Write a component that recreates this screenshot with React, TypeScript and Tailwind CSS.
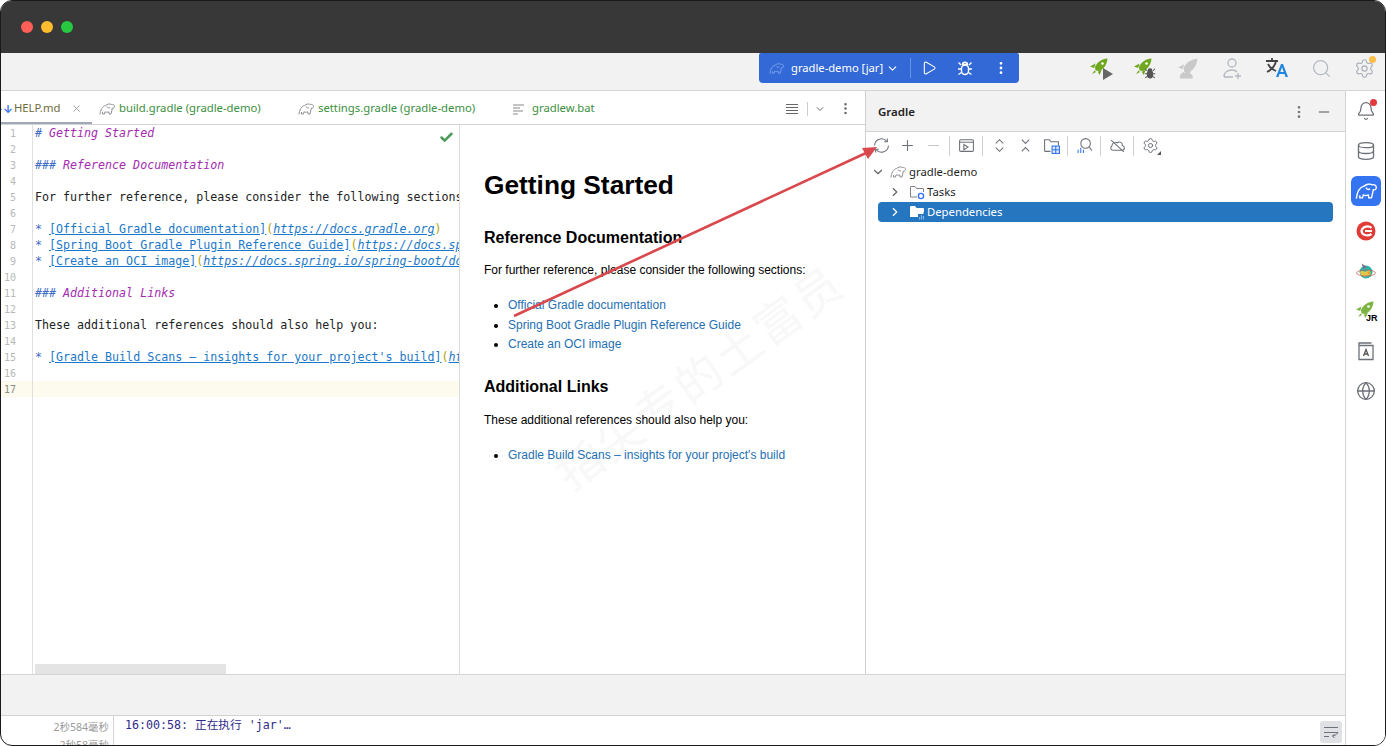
import { ChevronDown, ChevronRight, Database, Globe, MoreVertical, Play, Plus, Search, Settings, Minus, X, Bell, Check } from "lucide-react";

const ui = "font-['Noto_Sans','Inter',sans-serif]";

function Elephant({ className = "", color = "#8c8f94" }: { className?: string; color?: string }) {
  return (
    <svg viewBox="0 0 16 16" className={className} fill="none" stroke={color} strokeWidth="1" strokeLinejoin="round">
      <path d="M1 13.5 C1.5 9 3 5.5 6.5 4.5 C8 3 11 2.5 12.5 3.5 C14 3 15.5 4 15.5 5.5 C15.5 7 14 7.5 13.3 7 C13 9 12.5 11 12 13 L10 13 L9.8 10.8 C8.5 11.5 7 11.3 6 10.8 L5.5 13 L3.5 13 L3.5 11" />
      <path d="M8 5.5 C8.5 7 10 7.2 11 6.5" />
    </svg>
  );
}

function Rocket({ color = "#6fa81f", className = "", cloud }: { color?: string; className?: string; cloud?: boolean }) {
  return (
    <svg viewBox="0 0 20 20" className={className}>
      <path d="M18.5 1.5 C13 2 8 5 6 10 L6.5 13.5 L10 14 C15 12 18 7.5 18.5 1.5 Z" fill={color} />
      <path d="M6.5 6.5 L1 9.5 L5.2 11 Z M13 12.5 L10.5 18 L8.8 14.8 Z M5.5 13.5 L3 17 L7 15 Z" fill={color} />
      {cloud ? (
        <path d="M3 19.5 C1.5 16.5 4 14.5 6 15 C7 13 11 13 12 15.5 C14 15.5 15 18 14 19.5 Z" fill={color} />
      ) : (
        <circle cx="13.5" cy="6.5" r="1.3" fill="#fff" />
      )}
    </svg>
  );
}

function Beetle({ className = "", color = "currentColor", filled }: { className?: string; color?: string; filled?: boolean }) {
  return (
    <svg viewBox="0 0 16 16" className={className} fill={filled ? color : "none"} stroke={color} strokeWidth="1.4">
      <path d="M5.5 4.5 C5.5 1.5 10.5 1.5 10.5 4.5 Z" />
      <rect x="4.5" y="5" width="7" height="9.5" rx="3.5" />
      <path d="M1.5 2.5 L4 5 M14.5 2.5 L12 5 M1 9 H4.5 M15 9 H11.5 M1.5 14.5 L4.5 12.5 M14.5 14.5 L11.5 12.5" fill="none" />
    </svg>
  );
}

function RunRocket({ bug }: { bug?: boolean }) {
  return (
    <div className="relative h-[22px] w-[22px]">
      <Rocket className="h-[20px] w-[20px]" />
      {bug ? (
        <Beetle className="absolute bottom-0 right-[-1px] h-[12px] w-[12px]" color="#555" filled />
      ) : (
        <svg viewBox="0 0 10 12" className="absolute bottom-[-1px] right-[-2px] h-[12px] w-[10px]">
          <path d="M0 0 L10 6 L0 12 Z" fill="#666" />
        </svg>
      )}
    </div>
  );
}

function Translate() {
  return (
    <div className="relative h-[22px] w-[24px]">
      <svg viewBox="0 0 24 22" className="h-[22px] w-[24px]">
        <path d="M1 4 H13 M7 1 V4 M11 4 C10 9 6 13 2 15 M3 7 C5 11 8 13 11 14" fill="none" stroke="#444" strokeWidth="1.8" />
        <path d="M11 20 L16 7 H18 L23 20 H20.5 L19.5 17 H14.5 L13.5 20 Z M15.3 15 H18.7 L17 10.3 Z" fill="#2187e0" />
      </svg>
    </div>
  );
}

function Folder({ badge, white }: { badge: "gear" | "bars"; white?: boolean }) {
  return (
    <div className="relative h-[16px] w-[16px] shrink-0">
      <svg viewBox="0 0 16 16" className="h-[16px] w-[16px]">
        <path d="M1.5 13 V3 C1.5 2.7 1.7 2.5 2 2.5 H6 L7.5 4.5 H14 C14.3 4.5 14.5 4.7 14.5 5 V8" fill={white ? "#fff" : "none"} stroke={white ? "#fff" : "#7f8389"} />
        {white ? <path d="M1.5 4 H14.5 V13 H1.5 Z" fill="#fff" /> : <path d="M1.5 13 H8" stroke="#7f8389" fill="none" />}
        {badge === "gear" ? (
          <circle cx="12" cy="12" r="2.6" fill="#fff" stroke="#3574f0" strokeWidth="1.4" />
        ) : (
          <path d="M9 10 H16 V16 H9 Z" fill="#2675bf" />
        )}
        {badge === "bars" ? <path d="M10.5 15.5 V13 M12.5 15.5 V11 M14.5 15.5 V12" stroke="#7db4ea" strokeWidth="1.2" /> : null}
      </svg>
    </div>
  );
}

function Sep() {
  return <div className="mx-[6px] h-[20px] w-px shrink-0 bg-[#d0d0d0]" />;
}

function ToolButton({ children, w = "w-[26px]" }: { children: React.ReactNode; w?: string }) {
  return <div className={`flex h-[20px] shrink-0 items-center justify-center ${w}`}>{children}</div>;
}

function Tab({ label, icon, active, w }: { label: string; icon: React.ReactNode; active?: boolean; w: string }) {
  return (
    <div className={`relative flex h-full items-center ${w}`}>
      {icon}
      <span className={active ? "text-[#6e6a3a]" : "text-[#3b8f3e]"}>{label}</span>
    </div>
  );
}

const sy = "text-[#3d6dc4]";
const hd = "text-[#a32bb0] italic";
const lk = "text-[#1b78c9] underline";
const bk = "text-[#b3a200]";

const lines: React.ReactNode[] = [
  <><span className={sy + " italic"}>#</span><span className={hd}> Getting Started</span></>,
  null,
  <><span className={sy + " italic"}>###</span><span className={hd}> Reference Documentation</span></>,
  null,
  <span className="text-[#222]">For further reference, please consider the following sections:</span>,
  null,
  <><span className={sy}>*</span> <span className={lk}>[Official Gradle documentation]</span><span className={bk}>(</span><span className={lk + " italic"}>https://docs.gradle.org</span><span className={bk}>)</span></>,
  <><span className={sy}>*</span> <span className={lk}>[Spring Boot Gradle Plugin Reference Guide]</span><span className={bk}>(</span><span className={lk + " italic"}>https://docs.spring.io/spring-boot/gradle-plugin</span></>,
  <><span className={sy}>*</span> <span className={lk}>[Create an OCI image]</span><span className={bk}>(</span><span className={lk + " italic"}>https://docs.spring.io/spring-boot/docs/gradle-plugin</span></>,
  null,
  <><span className={sy + " italic"}>###</span><span className={hd}> Additional Links</span></>,
  null,
  <span className="text-[#222]">These additional references should also help you:</span>,
  null,
  <><span className={sy}>*</span> <span className={lk}>[Gradle Build Scans – insights for your project's build]</span><span className={bk}>(</span><span className={lk + " italic"}>https://scans.gradle.com</span></>,
  null,
  null,
];

function Editor() {
  return (
    <div className="relative flex h-full w-[459px] shrink-0 overflow-hidden border-r border-[#dcdcdc] bg-white font-['DejaVu_Sans_Mono',monospace] text-[11.65px] leading-[17px]">
      <div className="w-[32px] shrink-0 border-r border-[#e0e0e0]">
        {lines.map((_, i) => (
          <div key={i} className={`h-[16px] pr-[16px] text-right text-[10px] ${i === 16 ? "bg-[#fdfbee] text-[#8a8a8a]" : "text-[#b8b8b8]"}`}>
            {i + 1}
          </div>
        ))}
      </div>
      <div className="min-w-0 flex-1 overflow-hidden">
        {lines.map((line, i) => (
          <div key={i} className={`h-[16px] whitespace-pre pl-[2px] ${i === 16 ? "bg-[#fdfbee]" : ""}`}>
            {line}
          </div>
        ))}
      </div>
      <Check className="absolute left-[438px] top-[5px] h-[15px] w-[15px] text-[#4c9a5a]" strokeWidth={4} />
      <div className="absolute bottom-0 left-[34px] h-[10px] w-[191px] bg-[#e4e4e4]" />
    </div>
  );
}

function Preview() {
  const link = "text-[#2470b3] marker:text-black";
  return (
    <div className="relative min-w-0 flex-1 overflow-hidden bg-white pl-[24px] font-['Liberation_Sans',Arial,sans-serif] text-[12px] text-black">
      <div className="absolute left-[58px] top-[225px] w-[360px] -rotate-[36deg] whitespace-nowrap text-center font-['Noto_Sans_CJK_SC',sans-serif] text-[46px] leading-[50px] tracking-[3px] text-[#f8f8f8]">
        指尖专的土富员
      </div>
      <div className="relative">
        <h1 className="mt-[43px] text-[26.3px] font-bold leading-[34px]">Getting Started</h1>
        <h2 className="mt-[26px] text-[16px] font-bold leading-[20px]">Reference Documentation</h2>
        <p className="mt-[14px] leading-[16px]">For further reference, please consider the following sections:</p>
        <ul className="mt-[18px] list-disc pl-[24px] leading-[19.5px]">
          <li className={link}>Official Gradle documentation</li>
          <li className={link}>Spring Boot Gradle Plugin Reference Guide</li>
          <li className={link}>Create an OCI image</li>
        </ul>
        <h2 className="mt-[22px] text-[16px] font-bold leading-[20px]">Additional Links</h2>
        <p className="mt-[15px] leading-[16px]">These additional references should also help you:</p>
        <ul className="mt-[18px] list-disc pl-[24px] leading-[19.5px]">
          <li className={link}>Gradle Build Scans – insights for your project's build</li>
        </ul>
      </div>
    </div>
  );
}

function GradlePanel() {
  const ic = "h-[17px] w-[17px] text-[#6c7078]";
  return (
    <div className={`flex w-[480px] shrink-0 flex-col border-l border-[#cfcfcf] bg-white ${ui}`}>
      <div className="flex h-[41px] shrink-0 items-center justify-between border-b border-[#d4d4d4] bg-[#f2f2f2] pl-[12px] pr-[13px] pt-[1px]">
        <span className="text-[11.5px] font-semibold text-[#222]">Gradle</span>
        <div className="flex items-center gap-[9px]">
          <MoreVertical className="h-[16px] w-[16px] text-[#777]" />
          <Minus className="h-[16px] w-[16px] text-[#888]" />
        </div>
      </div>
      <div className="flex h-[27px] shrink-0 items-center pl-[2px]">
        <ToolButton>
          <svg viewBox="0 0 16 16" className={ic} fill="none" stroke="currentColor">
            <path d="M1.5 8 A6.5 6.5 0 0 1 13 4 M14.5 8 A6.5 6.5 0 0 1 3 12" />
            <path d="M13.5 1.5 V4.5 H10.5 M2.5 14.5 V11.5 H5.5" />
          </svg>
        </ToolButton>
        <ToolButton><Plus className={ic} strokeWidth={1.5} /></ToolButton>
        <ToolButton><Minus className="h-[17px] w-[17px] text-[#c4c4c4]" strokeWidth={1.5} /></ToolButton>
        <div className="-ml-[3px]"><Sep /></div>
        <ToolButton w="w-[20px]">
          <svg viewBox="0 0 16 16" className={ic} fill="none" stroke="currentColor">
            <rect x="1.5" y="2.5" width="13" height="11" rx="1" />
            <path d="M1.5 5 H14.5 M5.5 7 L9.5 9.5 L5.5 12 Z" />
          </svg>
        </ToolButton>
        <Sep />
        <ToolButton w="w-[20px]">
          <svg viewBox="0 0 16 16" className={ic} fill="none" stroke="currentColor"><path d="M4.5 6 L8 2.5 L11.5 6 M4.5 10 L8 13.5 L11.5 10" /></svg>
        </ToolButton>
        <ToolButton w="w-[32px]">
          <svg viewBox="0 0 16 16" className={ic} fill="none" stroke="currentColor"><path d="M4.5 2.5 L8 6 L11.5 2.5 M4.5 13.5 L8 10 L11.5 13.5" /></svg>
        </ToolButton>
        <ToolButton w="w-[20px]">
          <svg viewBox="0 0 16 16" className="h-[17px] w-[17px]" fill="none">
            <path d="M1.5 13.5 V2.5 H6 L7.5 4.5 H14.5 V8" stroke="#6c7078" />
            <path d="M1.5 13.5 H7" stroke="#6c7078" />
            <rect x="8.5" y="8.5" width="7" height="7" fill="#dbe8fd" stroke="#3574f0" />
            <path d="M12 8.5 V15.5 M8.5 12 H15.5" stroke="#3574f0" />
          </svg>
        </ToolButton>
        <Sep />
        <ToolButton w="w-[20px]">
          <svg viewBox="0 0 16 16" className="h-[17px] w-[17px]" fill="none">
            <circle cx="9" cy="6" r="4.5" stroke="#6c7078" />
            <path d="M12.5 9.5 L15 13" stroke="#6c7078" />
            <path d="M2 15 V12 M4.5 15 V10 M7 15 V12" stroke="#3574f0" />
          </svg>
        </ToolButton>
        <Sep />
        <ToolButton w="w-[20px]">
          <svg viewBox="0 0 16 16" className={ic} fill="none" stroke="currentColor">
            <path d="M4 12.5 C1.5 12.5 .8 9.5 2.8 8.3 C2.8 5.5 6 4 8 5.5 C10 3.5 13 5.5 12.5 8 C15 8.5 15.5 12.5 12 12.5 Z M2 3 L14 14" />
          </svg>
        </ToolButton>
        <Sep />
        <ToolButton w="w-[20px]">
          <div className="relative">
            <Settings className={ic} strokeWidth={1.4} />
            <div className="absolute bottom-[-1px] right-[-2px] h-0 w-0 border-b-[4px] border-l-[4px] border-b-[#555] border-l-transparent" />
          </div>
        </ToolButton>
      </div>
      <div className="flex flex-col px-[12px] pt-[3px] text-[11.3px] leading-[20px] text-[#1f1f1f]">
        <div className="flex h-[20px] items-center">
          <ChevronDown className="-ml-[7px] h-[14px] w-[14px] shrink-0 text-[#666]" />
          <Elephant className="ml-[5px] mr-[3px] h-[16px] w-[16px]" />
          <span>gradle-demo</span>
        </div>
        <div className="flex h-[20px] items-center pl-[10px]">
          <ChevronRight className="h-[14px] w-[14px] shrink-0 text-[#666]" />
          <div className="ml-[7px] mr-[2px]"><Folder badge="gear" /></div>
          <span>Tasks</span>
        </div>
        <div className="flex h-[20px] items-center rounded-[4px] bg-[#2675bf] pl-[10px] text-white">
          <ChevronRight className="h-[14px] w-[14px] shrink-0 text-white" />
          <div className="ml-[7px] mr-[2px]"><Folder badge="bars" white /></div>
          <span>Dependencies</span>
        </div>
      </div>
    </div>
  );
}

function SideStrip() {
  const box = "flex h-[40px] items-center justify-center";
  return (
    <div className="flex w-[40px] shrink-0 flex-col border-l border-[#d4d4d4] bg-white">
      <div className={box}>
        <div className="relative">
          <Bell className="h-[20px] w-[20px] text-[#6c7078]" strokeWidth={1.5} />
          <div className="absolute right-[-1px] top-[-2px] h-[7px] w-[7px] rounded-full bg-[#e0393e]" />
        </div>
      </div>
      <div className={box}><Database className="h-[20px] w-[20px] text-[#6c7078]" strokeWidth={1.6} /></div>
      <div className={box}>
        <div className="flex h-[30px] w-[30px] items-center justify-center rounded-[6px] bg-[#3574f0]">
          <Elephant className="h-[22px] w-[22px]" color="#fff" />
        </div>
      </div>
      <div className={box}>
        <svg viewBox="0 0 20 20" className="h-[20px] w-[20px]">
          <circle cx="10" cy="10" r="9.5" fill="#e03b35" />
          <path d="M15.5 7 C13 4.5 7 5 5.5 9.5 C5.5 14 11.5 16 15.5 13" fill="none" stroke="#fff" strokeWidth="2.2" />
          <path d="M9 10 H16" stroke="#fff" strokeWidth="2.2" />
        </svg>
      </div>
      <div className={box}>
        <svg viewBox="0 0 20 20" className="h-[20px] w-[20px]">
          <circle cx="10" cy="11" r="6.5" fill="#27b7a8" />
          <path d="M4 11 C6 8 8 13 13 9 L15 13 C11 16 7 16 5 14 Z" fill="#e6c64a" />
          <path d="M5.5 2.5 L11 6 L7.5 8 Z" fill="#7d6b8f" />
          <ellipse cx="10" cy="12" rx="9.5" ry="3" fill="none" stroke="#d9534f" strokeWidth="0.7" />
          <circle cx="13" cy="12" r="1.3" fill="#f0a020" />
        </svg>
      </div>
      <div className={box}>
        <div className="relative h-[22px] w-[22px]">
          <Rocket className="h-[20px] w-[20px]" color="#7cb342" />
          <span className="absolute bottom-[-1px] right-[-1px] font-['Liberation_Sans',sans-serif] text-[9px] font-bold leading-[10px] text-black">JR</span>
        </div>
      </div>
      <div className={box}>
        <svg viewBox="0 0 18 20" className="h-[20px] w-[18px]" fill="none" stroke="#6c7078" strokeWidth="1.3">
          <path d="M2 4.5 H16 V18.5 H2 Z M2 4.5 V2 H14.5" />
          <path d="M6.5 15 L9 8.5 L11.5 15 M7.3 13 H10.7" stroke="#555" />
        </svg>
      </div>
      <div className={box}><Globe className="h-[20px] w-[20px] text-[#6c7078]" strokeWidth={1.6} /></div>
    </div>
  );
}

export default function App() {
  return (
    <div className="relative h-[746px] w-[1386px] overflow-hidden bg-white">
      <div className="flex h-full flex-col overflow-hidden rounded-[12px] border border-[#1a1a1a] bg-white">
        <div className="flex h-[52px] shrink-0 items-center gap-[8px] bg-[#383838] pl-[20px]">
          <div className="h-[12px] w-[12px] rounded-full bg-[#ff5f57]" />
          <div className="h-[12px] w-[12px] rounded-full bg-[#febc2e]" />
          <div className="h-[12px] w-[12px] rounded-full bg-[#28c840]" />
        </div>

        <div className={`flex h-[38px] shrink-0 items-start justify-between border-b border-[#d4d4d4] bg-[#f2f2f2] ${ui}`}>
          <div className="ml-[758px] flex h-[30px] w-[260px] items-center rounded-b-[4px] rounded-t-[2px] bg-[#3369d6] pl-[10px] text-white">
            <Elephant className="h-[15px] w-[15px]" color="#7fa3ea" />
            <span className="ml-[7px] w-[92px] whitespace-nowrap text-[11.2px]">gradle-demo [jar]</span>
            <ChevronDown className="ml-[3px] h-[13px] w-[13px]" />
            <div className="ml-[11px] h-[20px] w-px bg-[#6b93e4]" />
            <Play className="ml-[10px] h-[16px] w-[16px]" strokeWidth={1.6} />
            <Beetle className="ml-[20px] h-[16px] w-[16px]" color="#fff" />
            <MoreVertical className="ml-[20px] h-[16px] w-[16px]" strokeWidth={2.2} />
          </div>
          <div className="mr-[10px] mt-[4px] flex items-center gap-[22px]">
            <RunRocket />
            <RunRocket bug />
            <Rocket className="h-[22px] w-[22px]" color="#c9c9c9" cloud />
            <svg viewBox="0 0 22 22" className="h-[22px] w-[22px]" fill="none" stroke="#b3b8c2" strokeWidth="1.3">
              <circle cx="11" cy="6" r="4" />
              <path d="M3 20 C3 15 7 13 11 13 C13 13 15 13.6 16 15 M3 20 H12 M17 16 V22 M14 19 H20" />
            </svg>
            <Translate />
            <Search className="h-[21px] w-[21px] text-[#b3b8c2]" strokeWidth={1.4} />
            <div className="relative">
              <Settings className="h-[21px] w-[21px] text-[#a9aeb8]" strokeWidth={1.3} />
              <div className="absolute right-[-1px] top-[-2px] h-[7px] w-[7px] rounded-full bg-[#fdbd4a]" />
            </div>
          </div>
        </div>

        <div className="flex min-h-0 flex-1">
          <div className="flex min-w-0 flex-1 flex-col">
            <div className="flex min-h-0 flex-1 border-b border-[#d4d4d4]">
              <div className="flex min-w-0 flex-1 flex-col">
                <div className={`relative flex h-[34px] shrink-0 items-center border-b border-[#d4d4d4] bg-white pt-[2px] text-[11.3px] ${ui}`}>
                  <Tab
                    w="w-[98px]"
                    active
                    label="HELP.md"
                    icon={<span className="-ml-[8px] mr-[1px] text-[11px] font-bold leading-none text-[#3574f0]">↓↓</span>}
                  />
                  <X className="absolute left-[70px] h-[11px] w-[11px] text-[#999]" />
                  <div className="absolute bottom-0 left-0 h-[2px] w-[91px] bg-[#a0a8b8]" />
                  <Tab w="w-[199px]" label="build.gradle (gradle-demo)" icon={<Elephant className="mr-[4px] h-[16px] w-[16px]" />} />
                  <Tab w="w-[214px]" label="settings.gradle (gradle-demo)" icon={<Elephant className="mr-[4px] h-[16px] w-[16px]" />} />
                  <Tab
                    w="w-[200px]"
                    label="gradlew.bat"
                    icon={
                      <svg viewBox="0 0 14 14" className="mr-[6px] h-[14px] w-[14px]" stroke="#888" fill="none"><path d="M1 3 H12 M1 6 H8 M1 9 H11 M1 12 H6" /></svg>
                    }
                  />
                  <div className="absolute right-[12px] flex items-center">
                    <svg viewBox="0 0 14 14" className="mr-[2px] h-[14px] w-[14px]" stroke="#666" fill="none"><path d="M1 2.5 H13 M1 5.5 H13 M1 8.5 H13 M1 11.5 H13" /></svg>
                    <div className="mx-[6px] h-[14px] w-px bg-[#ccc]" />
                    <ChevronDown className="h-[12px] w-[12px] text-[#777]" />
                    <MoreVertical className="ml-[12px] h-[15px] w-[15px] text-[#666]" />
                  </div>
                </div>
                <div className="flex min-h-0 flex-1">
                  <Editor />
                  <Preview />
                </div>
              </div>
              <GradlePanel />
            </div>
            <div className="h-[41px] shrink-0 border-b border-[#d4d4d4] bg-[#f2f2f2]" />
            <div className="flex h-[29px] shrink-0 overflow-hidden">
              <div className="w-[113px] shrink-0 border-r border-[#d4d4d4] pr-[4px] pt-[2px] text-right font-['Noto_Sans','Noto_Sans_CJK_SC',sans-serif] text-[10.5px] leading-[18px] text-[#9a9a9a]">
                <div>2秒584毫秒</div>
                <div>2秒58毫秒</div>
              </div>
              <div className="flex-1 pl-[11px] pt-[1px] font-['DejaVu_Sans_Mono','Noto_Sans_CJK_SC',monospace] text-[11.65px] leading-[17px] text-[#2d2a8c]">
                16:00:58: 正在执行 'jar'…
              </div>
              <div className="pr-[3px] pt-[5px]">
                <div className="flex h-[22px] w-[22px] items-center justify-center rounded-[3px] bg-[#dfe1e5]">
                  <svg viewBox="0 0 16 16" className="h-[16px] w-[16px]" fill="none" stroke="#6c7078">
                    <path d="M1 3.5 H15 M1 8.5 H15 C15 8.5 13 12 9.5 12 M11.5 10 L9.5 12 L11.5 14 M1 12.5 H6" />
                  </svg>
                </div>
              </div>
            </div>
          </div>
          <SideStrip />
        </div>
      </div>

      <svg viewBox="0 0 1386 746" className="pointer-events-none absolute left-0 top-0 h-[746px] w-[1386px]">
        <path d="M514 316 L866 153" stroke="#d9484c" strokeWidth="2.6" />
        <path d="M877 147 L862 148 L868 159 Z" fill="#d9484c" />
      </svg>
    </div>
  );
}
